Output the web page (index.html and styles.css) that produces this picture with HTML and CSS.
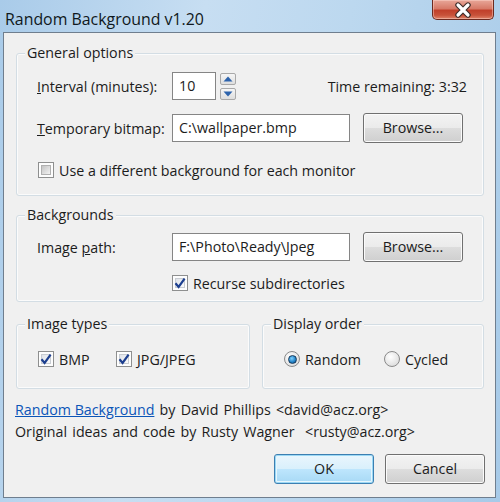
FILE: index.html
```html
<!DOCTYPE html>
<html>
<head>
<meta charset="utf-8">
<link rel="stylesheet" href="styles.css">
</head>
<body>
<div class="window">
  <div class="titlebar">
    <span class="title">Random Background v1.20</span>
    <div class="close">
      <svg width="24" height="16" viewBox="0 0 24 16"><path d="M7 3 L17 13 M17 3 L7 13" stroke="#3a2a28" stroke-width="5.4" stroke-linecap="round"/><path d="M7 3 L17 13 M17 3 L7 13" stroke="#fff" stroke-width="3.2" stroke-linecap="round"/></svg>
    </div>
  </div>
  <div class="client">
    <div class="group general">
      <div class="gtitle">General options</div>
      <div class="row r1">
        <span class="label"><u>I</u>nterval (minutes):</span>
        <div class="input small">10</div>
        <div class="spin">
          <div class="sbtn"><svg width="10" height="6" viewBox="0 0 10 6"><path d="M5 0.5 L9.5 5.5 L0.5 5.5Z" fill="#2d63ac"/></svg></div>
          <div class="sbtn"><svg width="10" height="6" viewBox="0 0 10 6"><path d="M0.5 0.5 L9.5 0.5 L5 5.5Z" fill="#2d63ac"/></svg></div>
        </div>
        <span class="time">Time remaining: 3:32</span>
      </div>
      <div class="row r2">
        <span class="label"><u>T</u>emporary bitmap:</span>
        <div class="input wide">C:\wallpaper.bmp</div>
        <div class="btn browse">Browse...</div>
      </div>
      <div class="row r3">
        <span class="cb"></span>
        <span class="cbtext">Use a different background for each monitor</span>
      </div>
    </div>

    <div class="group backgrounds">
      <div class="gtitle">Backgrounds</div>
      <div class="row r4">
        <span class="label">Image <u>p</u>ath:</span>
        <div class="input wide">F:\Photo\Ready\Jpeg</div>
        <div class="btn browse">Browse...</div>
      </div>
      <div class="row r5">
        <span class="cb checked"><svg width="14" height="14" viewBox="0 0 14 14"><path d="M2.5 7.2 L5.6 11 L11.6 2.6" fill="none" stroke="#1d3f8f" stroke-width="2.2"/></svg></span>
        <span class="cbtext">Recurse subdirectories</span>
      </div>
    </div>

    <div class="bottomgroups">
      <div class="group types">
        <div class="gtitle">Image types</div>
        <div class="row r6">
          <div class="opt w78">
            <span class="cb checked"><svg width="14" height="14" viewBox="0 0 14 14"><path d="M2.5 7.2 L5.6 11 L11.6 2.6" fill="none" stroke="#1d3f8f" stroke-width="2.2"/></svg></span>
            <span class="cbtext">BMP</span>
          </div>
          <div class="opt">
            <span class="cb checked"><svg width="14" height="14" viewBox="0 0 14 14"><path d="M2.5 7.2 L5.6 11 L11.6 2.6" fill="none" stroke="#1d3f8f" stroke-width="2.2"/></svg></span>
            <span class="cbtext">JPG/JPEG</span>
          </div>
        </div>
      </div>
      <div class="group order">
        <div class="gtitle">Display order</div>
        <div class="row r6">
          <div class="opt w100">
            <span class="radio on"><span class="dot"></span></span>
            <span class="cbtext">Random</span>
          </div>
          <div class="opt">
            <span class="radio"></span>
            <span class="cbtext">Cycled</span>
          </div>
        </div>
      </div>
    </div>

    <div class="footer">
      <div class="line"><a class="link" href="#">Random Background</a> by David Phillips &lt;david@acz.org&gt;</div>
      <div class="line">Original ideas and code by Rusty Wagner &nbsp;&lt;rusty@acz.org&gt;</div>
    </div>

    <div class="buttons">
      <div class="btn ok">OK</div>
      <div class="btn cancel">Cancel</div>
    </div>
  </div>
</div>
</body>
</html>
```
FILE: styles.css
```css
* { box-sizing: border-box; }
html, body { margin: 0; padding: 0; }
body {
  width: 500px;
  height: 502px;
  overflow: hidden;
  font-family: "Open Sans", "Noto Sans", sans-serif;
  font-size: 14.25px;
  color: #1c1c1c;
}
.window {
  position: relative;
  width: 500px;
  height: 502px;
  background: linear-gradient(100deg, #a9cbe9 0%, #c7def2 35%, #bcd8ef 60%, #a7cae8 100%);
  display: flex;
  flex-direction: column;
}
.titlebar {
  height: 32px;
  display: flex;
  align-items: flex-start;
  padding: 8px 0 0 5px;
}
.title {
  font-size: 15.9px;
  line-height: 22px;
  color: #101820;
}
.close {
  position: absolute;
  left: 432px;
  top: 0;
  width: 62px;
  height: 20px;
  border: 1px solid #6c2a20;
  border-top: none;
  border-radius: 0 0 5px 5px;
  background: linear-gradient(#e8a799 0%, #d77a68 45%, #c1402b 55%, #c8523a 80%, #e0846a 100%);
  box-shadow: inset 0 0 0 1px rgba(255,220,210,0.45);
  display: flex;
  align-items: center;
  justify-content: center;
}
.client {
  margin: 0 4px 4px 3px;
  height: 466px;
  border: 1px solid #6f7e8e;
  background: #f0f0f0;
  padding: 20px 11px 0 12px;
}
.group {
  border: 1px solid #d3dde4;
  border-radius: 3px;
  box-shadow: inset 0 0 0 1px #fbfbfb;
  padding: 0 15px 16px 20px;
}
.gtitle {
  width: fit-content;
  margin: -10px 0 0 -12px;
  padding: 0 2px;
  line-height: 18px;
  background: #f0f0f0;
}
.row {
  display: flex;
  align-items: center;
}
.label {
  width: 135px;
  flex: none;
}
.r1 { height: 28px; margin-top: 10px; }
.r2 { height: 30px; margin-top: 13px; }
.r3 { height: 18px; margin-top: 18px; }
.backgrounds { margin-top: 19px; padding-bottom: 9px; }
.r4 { height: 30px; margin-top: 8px; }
.r5 { height: 18px; margin-top: 12px; padding-left: 135px; }
.input {
  height: 28px;
  border: 1px solid #858585;
  background: #fff;
  padding: 0 0 0 6px;
  line-height: 26px;
  white-space: nowrap;
}
.input.small { width: 44px; }
.input.wide { width: 178px; }
.spin {
  margin-left: 4px;
  width: 16px;
  height: 27px;
  display: flex;
  flex-direction: column;
  justify-content: space-between;
}
.sbtn {
  height: 12px;
  border: 1px solid #a9a9a9;
  border-radius: 2px;
  background: linear-gradient(#f6f6f6, #dedede);
  display: flex;
  align-items: center;
  justify-content: center;
}
.time { margin-left: auto; padding-right: 1px; }
.btn {
  height: 30px;
  width: 100px;
  border: 1px solid #707070;
  border-radius: 3px;
  background: linear-gradient(#f3f3f3 0%, #ebebeb 49%, #dddddd 50%, #cfcfcf 100%);
  box-shadow: inset 0 0 0 1px #fbfbfb;
  display: flex;
  align-items: center;
  justify-content: center;
  line-height: 18px;
}
.browse { margin-left: 13px; }
.cb {
  width: 16px;
  height: 16px;
  flex: none;
  border: 1px solid #8e8f8f;
  background: #fdfdfd;
  display: flex;
  align-items: center;
  justify-content: center;
  position: relative;
}
.cb::before {
  content: "";
  position: absolute;
  inset: 2px;
  border: 1px solid #b0b0b0;
  background: linear-gradient(135deg, #c4c4c4, #f2f2f2);
}
.cb.checked::before {
  border-color: #c8ccd2;
  background: linear-gradient(135deg, #e0e4ea, #fafafa);
}
.cb svg { position: relative; }
.cbtext { margin-left: 5px; white-space: nowrap; }
.r3 .cb { margin-left: 1px; }
.bottomgroups {
  margin-top: 22px;
  display: grid;
  grid-template-columns: 234px 1fr;
  gap: 12px;
}
.bottomgroups .group { padding-bottom: 20px; }
.r6 { height: 18px; margin-top: 17px; }
.types .r6 { padding-left: 1px; }
.opt { display: flex; align-items: center; }
.w78 { width: 78px; }
.w100 { width: 100px; }
.radio {
  width: 16px;
  height: 16px;
  border-radius: 50%;
  border: 1px solid #8a8a8a;
  background: radial-gradient(circle at 40% 35%, #ffffff, #d4d4d4);
  display: flex;
  align-items: center;
  justify-content: center;
}
.dot {
  width: 9px;
  height: 9px;
  border-radius: 50%;
  border: 1px solid #163a5c;
  background: radial-gradient(circle at 40% 35%, #7fd1ff, #1f7fc4 60%, #0e4d83);
}
.order .r6 { padding-left: 1px; }
.footer {
  margin-top: 10px;
  line-height: 22px;
  margin-left: -1px;
  word-spacing: 1.5px;
}
.link { color: #0b55b8; text-decoration: underline; word-spacing: 0; }
.buttons {
  margin-top: 11px;
  display: flex;
  justify-content: flex-end;
  gap: 11px;
  margin-right: -1px;
}
.ok {
  border-color: #3c7fb1;
  background: linear-gradient(#eaf6fd 0%, #d9f0fc 49%, #bee6fd 50%, #a7d9f5 100%);
  box-shadow: inset 0 0 0 1px #9bd8f5, inset 0 0 0 2px #e7f6fd;
}
```
